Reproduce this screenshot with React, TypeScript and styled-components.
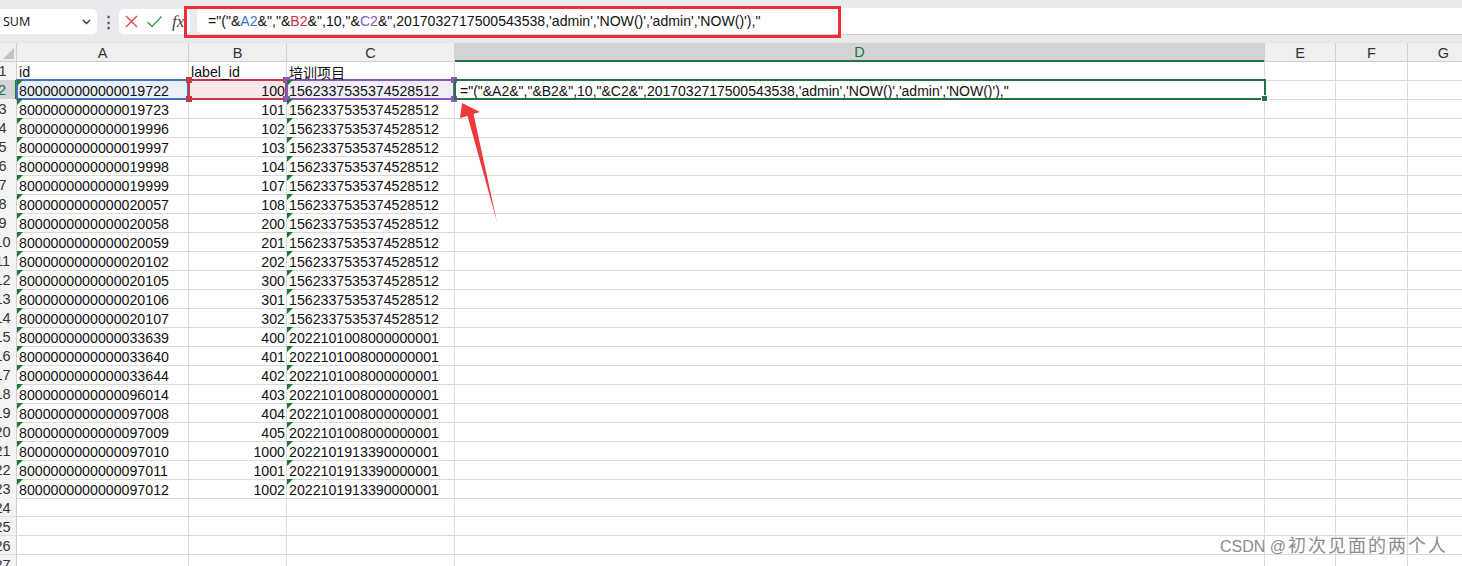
import React from "react";
import styled, { createGlobalStyle, css } from "styled-components";

const GlobalStyle = createGlobalStyle`
  html, body { margin: 0; padding: 0; background: #fff; overflow: hidden; }
  body { width: 1462px; height: 566px; font-family: "Liberation Sans", Arial, sans-serif; }
  #root { width: 1462px; height: 566px; }
`;

const COLS = "17px 172px 98px 168px 810px 71px 72px 72px";
const GRID = "#dadada";
const GREEN = "#217346";

const Page = styled.div`
  position: relative;
  width: 1462px;
  height: 566px;
  overflow: hidden;
  display: flex;
  flex-direction: column;
`;

const TopBar = styled.div`
  height: 43px;
  flex: none;
  background: #e9eaed;
  display: flex;
  align-items: flex-start;
  padding-top: 8px;
  box-sizing: border-box;
  border-bottom: 1px solid #e6e6e6;
`;

const NameBox = styled.div`
  width: 97px;
  height: 25px;
  margin-top: 1px;
  background: #fff;
  border-radius: 0 5px 5px 0;
  display: flex;
  align-items: center;
  justify-content: space-between;
  padding: 0 6px 0 3px;
  box-sizing: border-box;
  font-family: "Noto Sans", "Open Sans", sans-serif;
  font-size: 12.5px;
  color: #222;
`;

const Dots = styled.div`
  width: 22px;
  text-align: center;
  font-size: 15px;
  line-height: 27px;
  color: #555;
  font-weight: bold;
`;

const ActionBox = styled.div`
  width: 71px;
  height: 25px;
  margin-top: 1px;
  background: #fff;
  border-radius: 5px;
  display: flex;
  align-items: center;
  gap: 7px;
  padding-left: 5px;
  box-sizing: border-box;
`;

const Fx = styled.span`
  font-family: "Liberation Serif", "DejaVu Serif", serif;
  font-style: italic;
  font-size: 17px;
  color: #444;
  margin-left: 2px;
`;

const FormulaInput = styled.div`
  flex: 1;
  height: 27px;
  margin-left: 7px;
  background: #fff;
  border-radius: 5px 0 0 5px;
  border-bottom: 1px solid #cfcfcf;
  display: flex;
  align-items: center;
  padding-left: 11px;
  box-sizing: border-box;
  font-family: "Liberation Sans", Arial, sans-serif;
  font-size: 14.1px;
  color: #111;
  white-space: nowrap;
`;

const Ref = styled.span<{ $c: string }>`
  color: ${(p) => p.$c};
`;

const RedFrame = styled.div`
  position: absolute;
  left: 184px;
  top: 6px;
  width: 657px;
  height: 32px;
  border: 3px solid #ee3035;
  box-sizing: border-box;
  pointer-events: none;
`;

const Sheet = styled.div`
  flex: 1;
  overflow: hidden;
`;

const Row = styled.div<{ $h: number }>`
  display: grid;
  grid-template-columns: ${COLS};
  height: ${(p) => p.$h}px;
`;

const Corner = styled.div`
  position: relative;
  background: #efefef;
  border-right: 1px solid #cfcfcf;
  border-bottom: 1px solid #cfcfcf;
  &::after {
    content: "";
    position: absolute;
    right: 2px;
    bottom: 2px;
    border-left: 11px solid transparent;
    border-bottom: 11px solid #c4c4c4;
  }
`;

const ColHead = styled.div<{ $sel?: boolean }>`
  background: ${(p) => (p.$sel ? "#d3d3d3" : "#efefef")};
  border-right: 1px solid #d0d0d0;
  border-bottom: ${(p) => (p.$sel ? `2px solid ${GREEN}` : "1px solid #cfcfcf")};
  display: flex;
  align-items: center;
  justify-content: center;
  padding-top: 1px;
  font-size: 14.5px;
  color: ${(p) => (p.$sel ? GREEN : "#333")};
  box-sizing: border-box;
`;

const RowHead = styled.div<{ $sel?: boolean }>`
  background: ${(p) => (p.$sel ? "#d3d3d3" : "#f3f3f3")};
  border-right: ${(p) => (p.$sel ? `2px solid ${GREEN}` : "1px solid #cfcfcf")};
  border-bottom: 1px solid #e0e0e0;
  display: flex;
  align-items: flex-start;
  justify-content: center;
  overflow: hidden;
  font-size: 14.5px;
  color: ${(p) => (p.$sel ? GREEN : "#333")};
  box-sizing: border-box;
  padding: 2px 11px 0 0;
  white-space: nowrap;
`;

type Sel = "a" | "b" | "c" | "d" | undefined;

const selColors: Record<string, { line: string; bg: string; handles: boolean }> = {
  a: { line: "#3f72c3", bg: "#eaf0f8", handles: false },
  b: { line: "#c43a44", bg: "#f7e7e9", handles: true },
  c: { line: "#8559c2", bg: "#efedf6", handles: true },
};

const Cell = styled.div<{ $right?: boolean; $tri?: boolean; $sel?: Sel }>`
  position: relative;
  border-right: 1px solid ${GRID};
  border-bottom: 1px solid ${GRID};
  box-sizing: border-box;
  display: flex;
  align-items: flex-start;
  justify-content: ${(p) => (p.$right ? "flex-end" : "flex-start")};
  padding: 3px ${(p) => (p.$right ? "1px" : "2px")} 0;
  font-size: 14.2px;
  line-height: 16px;
  color: #111;
  white-space: nowrap;
  background: ${(p) => (p.$sel && p.$sel !== "d" ? selColors[p.$sel].bg : "transparent")};
  ${(p) =>
    p.$tri &&
    css`
      &::before {
        content: "";
        position: absolute;
        left: 0;
        top: 0;
        border-top: 6px solid #1b7a2f;
        border-right: 6px solid transparent;
        z-index: 3;
      }
    `}
`;

const Label = styled.span<{ $cjk?: boolean }>`
  position: relative;
  z-index: 4;
  ${(p) =>
    p.$cjk &&
    css`
      font-family: "Noto Sans CJK SC", sans-serif;
      font-size: 14px;
      line-height: 16px;
    `}
`;

const SelFrame = styled.div<{ $c: string }>`
  position: absolute;
  left: -1px;
  top: -1px;
  right: -1px;
  bottom: -1px;
  border: 2px solid ${(p) => p.$c};
  pointer-events: none;
  z-index: 2;
`;

const Handle = styled.div<{ $c: string; $x: "l" | "r"; $y: "t" | "b" }>`
  position: absolute;
  width: 6px;
  height: 6px;
  background: ${(p) => p.$c};
  ${(p) => (p.$x === "l" ? "left: -4px;" : "right: -4px;")}
  ${(p) => (p.$y === "t" ? "top: -4px;" : "bottom: -4px;")}
`;

const ActiveFrame = styled.div`
  position: absolute;
  left: -1px;
  top: -1px;
  right: -2px;
  bottom: -1px;
  border: 2px solid ${GREEN};
  pointer-events: none;
  z-index: 2;
  &::after {
    content: "";
    position: absolute;
    right: -4px;
    bottom: -4px;
    width: 5px;
    height: 5px;
    background: ${GREEN};
    border: 1px solid #fff;
  }
`;

const FormulaText = styled.span`
  font-size: 14px;
  padding-left: 3px;
`;

const Watermark = styled.div`
  position: absolute;
  right: 14px;
  bottom: 9px;
  color: #8c8c8c;
  font-family: "Liberation Sans", Arial, sans-serif;
  font-size: 16px;
  text-shadow: 0 0 1px #fff;
  white-space: nowrap;
  display: flex;
  align-items: baseline;
`;

const WmCjk = styled.span`
  font-family: "Noto Sans CJK SC", sans-serif;
  font-size: 18px;
  letter-spacing: 2px;
  margin-left: 2px;
`;

const ArrowSvg = styled.svg`
  position: absolute;
  left: 0;
  top: 0;
  pointer-events: none;
`;

const prefix = "8" + "0".repeat(13);
const aVals = [
  "19722", "19723", "19996", "19997", "19998", "19999", "20057", "20058", "20059", "20102", "20105",
  "20106", "20107", "33639", "33640", "33644", "96014", "97008", "97009", "97010", "97011", "97012",
];
const bVals = [100, 101, 102, 103, 104, 107, 108, 200, 201, 202, 300, 301, 302, 400, 401, 402, 403, 404, 405, 1000, 1001, 1002];
const cVal = (i: number) =>
  i < 13 ? "1562337535374528512" : i < 19 ? "2022101008000000001" : "2022101913390000001";

const FORMULA_TAIL = `",2017032717500543538,'admin','NOW()','admin','NOW()'),"`;

function Formula() {
  return (
    <>
      {'="("&'}
      <Ref $c="#3a74c4">A2</Ref>
      {'&","&'}
      <Ref $c="#c43a44">B2</Ref>
      {'&",10,"&'}
      <Ref $c="#8559c2">C2</Ref>
      {"&" + FORMULA_TAIL}
    </>
  );
}

function SelCell({ kind, children, right }: { kind: "a" | "b" | "c"; children: React.ReactNode; right?: boolean }) {
  const s = selColors[kind];
  return (
    <Cell $sel={kind} $right={right} $tri={kind !== "b"}>
      {children}
      <SelFrame $c={s.line}>
        {s.handles && (
          <>
            <Handle $c={s.line} $x="l" $y="t" />
            <Handle $c={s.line} $x="r" $y="t" />
            <Handle $c={s.line} $x="l" $y="b" />
            <Handle $c={s.line} $x="r" $y="b" />
          </>
        )}
      </SelFrame>
    </Cell>
  );
}

function EmptyCells({ n }: { n: number }) {
  return (
    <>
      {Array.from({ length: n }).map((_, i) => (
        <Cell key={i} />
      ))}
    </>
  );
}

export default function App() {
  const letters = ["A", "B", "C", "D", "E", "F", "G"];
  return (
    <Page>
      <GlobalStyle />
      <TopBar>
        <NameBox>
          <span>SUM</span>
          <svg width="9" height="6" viewBox="0 0 9 6">
            <path d="M1 1 L4.5 4.5 L8 1" stroke="#333" strokeWidth="1.4" fill="none" />
          </svg>
        </NameBox>
        <Dots>⋮</Dots>
        <ActionBox>
          <svg width="15" height="15" viewBox="0 0 15 15">
            <path d="M2 2 L13 13 M13 2 L2 13" stroke="#e0464c" strokeWidth="1.4" fill="none" />
          </svg>
          <svg width="17" height="15" viewBox="0 0 17 15">
            <path d="M1.5 8 L6 12.5 L15.5 2.5" stroke="#3d9a52" strokeWidth="1.4" fill="none" />
          </svg>
          <Fx>fx</Fx>
        </ActionBox>
        <FormulaInput>
          <Formula />
        </FormulaInput>
      </TopBar>
      <Sheet>
        <Row $h={18}>
          <Corner />
          {letters.map((l) => (
            <ColHead key={l} $sel={l === "D"}>
              {l}
            </ColHead>
          ))}
        </Row>
        <Row $h={19}>
          <RowHead>1</RowHead>
          <Cell>
            <Label>id</Label>
          </Cell>
          <Cell>
            <Label>label_id</Label>
          </Cell>
          <Cell>
            <Label $cjk>培训项目</Label>
          </Cell>
          <EmptyCells n={4} />
        </Row>
        {aVals.map((a, i) => {
          const r = i + 2;
          if (r === 2) {
            return (
              <Row $h={19} key={r}>
                <RowHead $sel>{r}</RowHead>
                <SelCell kind="a">{prefix + a}</SelCell>
                <SelCell kind="b" right>
                  {bVals[i]}
                </SelCell>
                <SelCell kind="c">{cVal(i)}</SelCell>
                <Cell>
                  <FormulaText>{'="("&A2&","&B2&",10,"&C2&' + FORMULA_TAIL}</FormulaText>
                  <ActiveFrame />
                </Cell>
                <EmptyCells n={3} />
              </Row>
            );
          }
          return (
            <Row $h={19} key={r}>
              <RowHead>{r}</RowHead>
              <Cell $tri>{prefix + a}</Cell>
              <Cell $right>{bVals[i]}</Cell>
              <Cell $tri>{cVal(i)}</Cell>
              <EmptyCells n={4} />
            </Row>
          );
        })}
        {[24, 25, 26, 27].map((r) => (
          <Row $h={19} key={r}>
            <RowHead>{r}</RowHead>
            <EmptyCells n={7} />
          </Row>
        ))}
      </Sheet>
      <RedFrame />
      <ArrowSvg width="1462" height="566">
        <polygon points="497,222 473.5,114 480,112 462,103 460,118 467.5,116" fill="#f0393b" />
      </ArrowSvg>
      <Watermark>
        <span>CSDN @</span>
        <WmCjk>初次见面的两个人</WmCjk>
      </Watermark>
    </Page>
  );
}
